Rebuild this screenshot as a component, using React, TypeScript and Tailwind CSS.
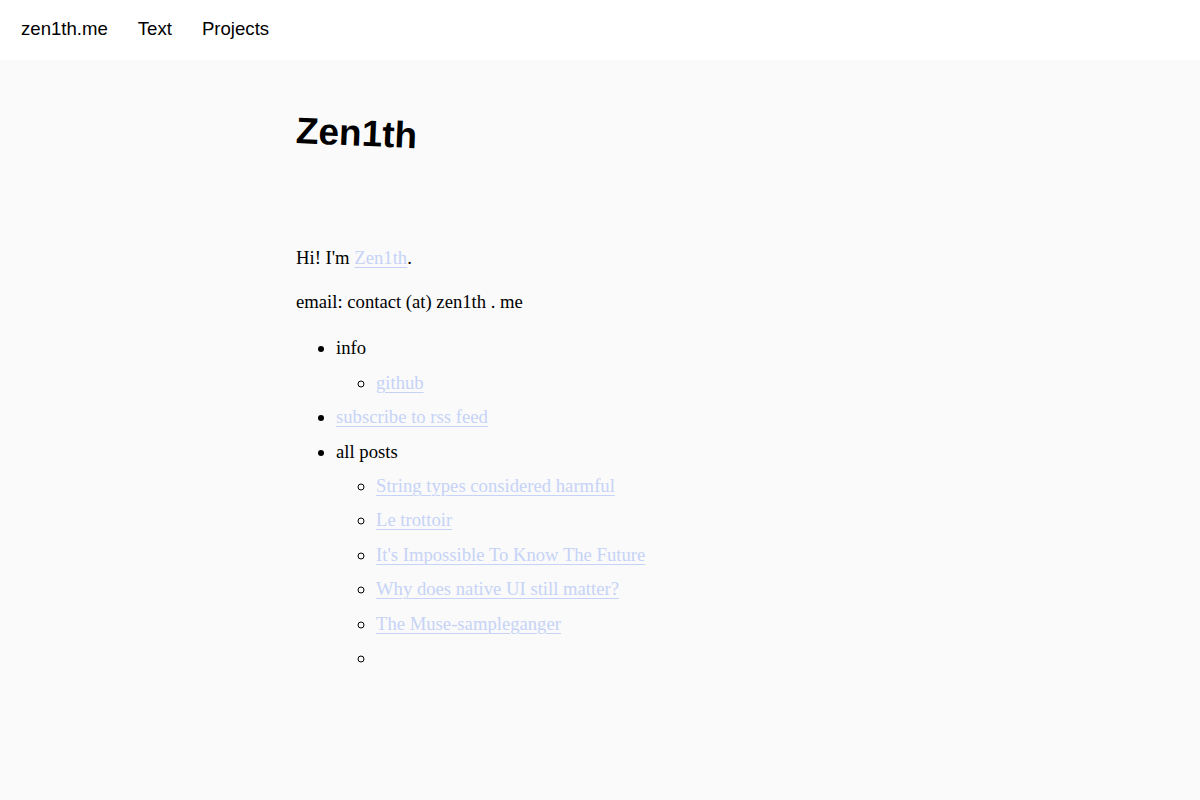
import React from 'react';

const posts = [
  'String types considered harmful',
  'Le trottoir',
  "It's Impossible To Know The Future",
  'Why does native UI still matter?',
  'The Muse-sampleganger',
];

const linkClass = 'text-[#c6d3f6] underline decoration-1 underline-offset-[3px]';

export default function App() {
  return (
    <div className="min-h-screen bg-[#fafafa] text-black">
      <nav className="flex h-[60px] items-center gap-[30px] bg-white pb-[2px] pl-[21px] font-['Liberation_Sans',Arial,sans-serif] text-[18.6px]">
        <a href="#">zen1th.me</a>
        <a href="#">Text</a>
        <a href="#">Projects</a>
      </nav>

      <main className="mx-auto w-[608px] font-['Liberation_Serif','Times_New_Roman',serif] text-[18.67px] leading-[25.2px]">
        <h1 className="mt-[50px] inline-block origin-left rotate-[2.5deg] font-['Liberation_Sans',Arial,sans-serif] text-[37px] font-bold leading-[42px]">
          Zen1th
        </h1>

        <p className="mt-[93px]">
          Hi! I'm <a href="#" className={linkClass}>Zen1th</a>.
        </p>
        <p className="mt-[19px]">email: contact (at) zen1th . me</p>

        <ul className="mt-[21px] list-disc space-y-[9.2px] pl-10">
          <li>
            info
            <ul className="mt-[9.2px] list-[circle] pl-10">
              <li>
                <a href="#" className={linkClass}>github</a>
              </li>
            </ul>
          </li>
          <li>
            <a href="#" className={linkClass}>subscribe to rss feed</a>
          </li>
          <li>
            all posts
            <ul className="mt-[9.2px] list-[circle] space-y-[9.2px] pl-10">
              {posts.map((title) => (
                <li key={title}>
                  <a href="#" className={linkClass}>{title}</a>
                </li>
              ))}
              <li>&nbsp;</li>
            </ul>
          </li>
        </ul>
      </main>
    </div>
  );
}
